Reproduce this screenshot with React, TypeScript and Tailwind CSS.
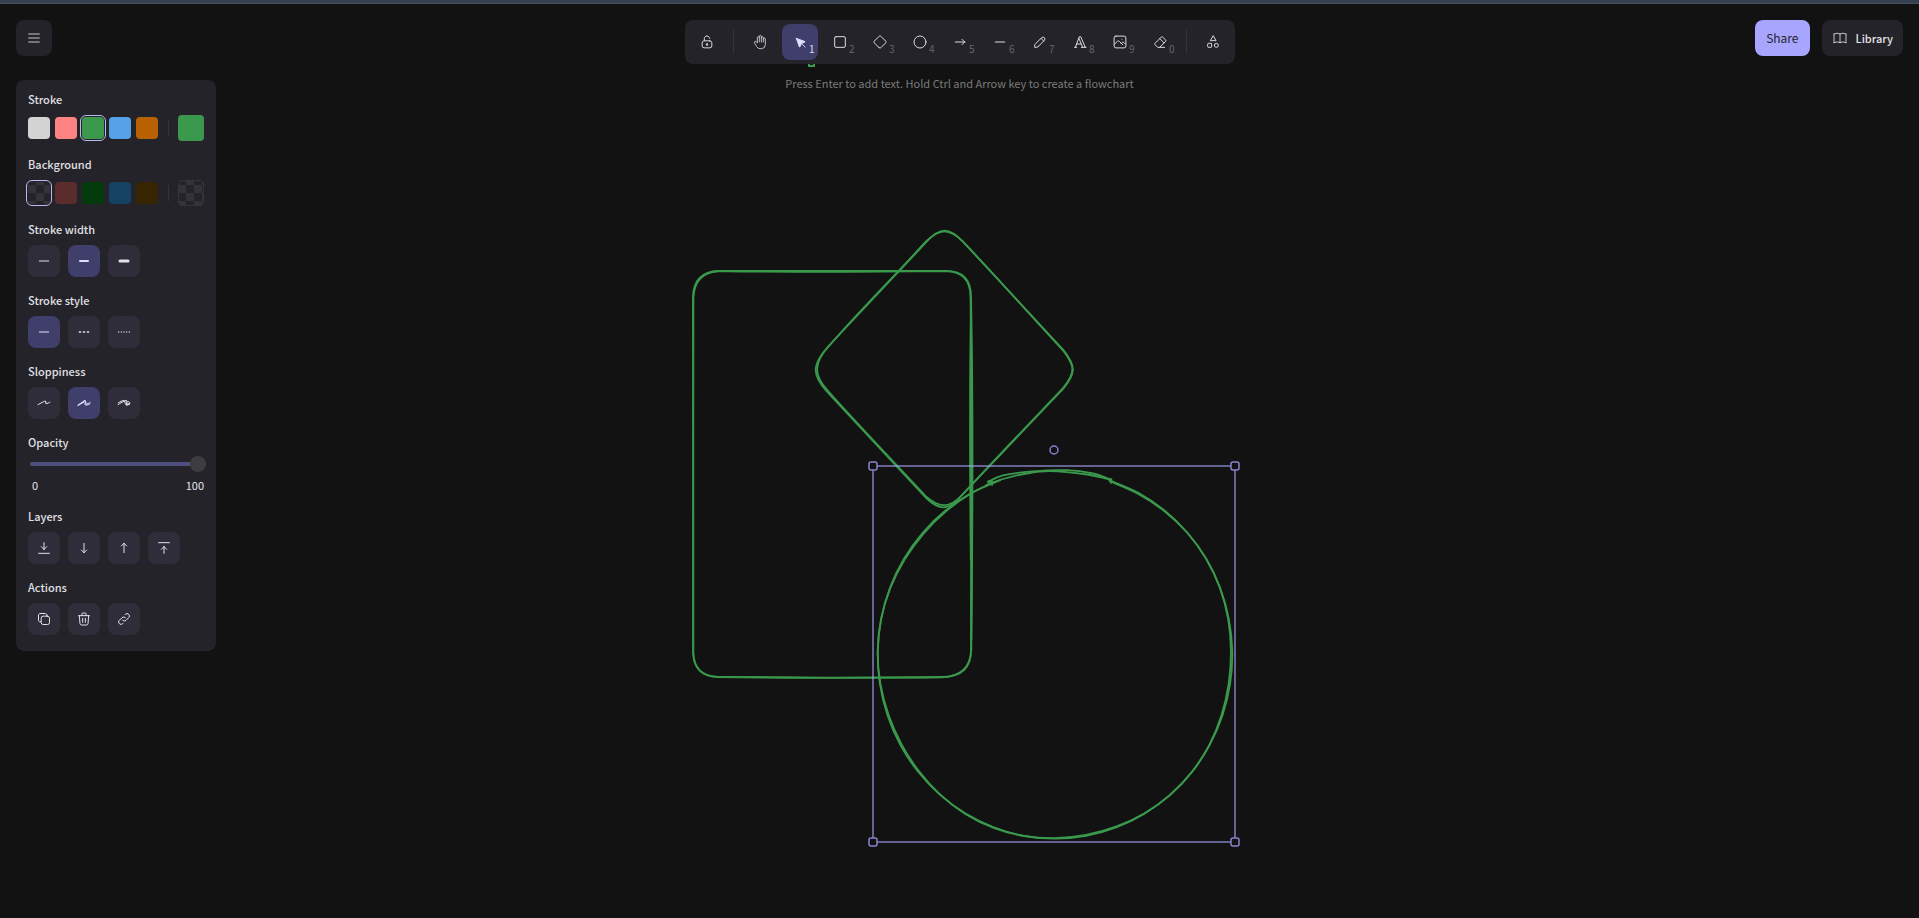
import React from "react";

type Pt = [number, number];

function spline(pts: Pt[]) {
  const n = pts.length;
  const at = (i: number): Pt => pts[Math.max(0, Math.min(n - 1, i))];
  let d = `M${pts[0][0]} ${pts[0][1]}`;
  for (let i = 0; i < n - 1; i++) {
    const [p0, p1, p2, p3] = [at(i - 1), at(i), at(i + 1), at(i + 2)];
    const c1 = [p1[0] + (p2[0] - p0[0]) / 6, p1[1] + (p2[1] - p0[1]) / 6];
    const c2 = [p2[0] - (p3[0] - p1[0]) / 6, p2[1] - (p3[1] - p1[1]) / 6];
    d += `C${c1[0].toFixed(2)} ${c1[1].toFixed(2)} ${c2[0].toFixed(2)} ${c2[1].toFixed(2)} ${p2[0].toFixed(2)} ${p2[1].toFixed(2)}`;
  }
  return d;
}

/** One hand-drawn lap of an ellipse, with a slow wobble of its radius. */
function lap(cx: number, cy: number, rx: number, ry: number, wobble: (t: number) => number): Pt[] {
  const steps = 32;
  const start = (-72 * Math.PI) / 180;
  const sweep = (324 * Math.PI) / 180;
  return Array.from({ length: steps + 1 }, (_, i) => {
    const t = start + (sweep * i) / steps;
    const w = wobble(t);
    return [cx + (rx + w) * Math.cos(t), cy + (ry + w) * Math.sin(t)];
  });
}

const lapOne = lap(1055, 655, 177, 184, (t) => 0.3 * Math.cos(2 * t));
const lapTwo = lap(1055, 655, 177, 184, (t) => -0.4 + 0.8 * Math.cos(5 * t + 2.6));

const Ic = ({
  d,
  box = 24,
  w = 1.5,
  fill = "none",
  children,
}: {
  d?: string;
  box?: number;
  w?: number;
  fill?: string;
  children?: React.ReactNode;
}) => (
  <svg
    aria-hidden="true"
    className="size-4 shrink-0"
    viewBox={`0 0 ${box} ${box}`}
    fill={fill}
    stroke="currentColor"
    strokeWidth={w}
    strokeLinecap="round"
    strokeLinejoin="round"
  >
    {d && <path d={d} />}
    {children}
  </svg>
);

const tools = [
  { name: "Hand", icon: <Ic w={1.25} d="M8 13v-7.5a1.5 1.5 0 0 1 3 0v6.5M11 5.5v-2a1.5 1.5 0 1 1 3 0v8.5M14 5.5a1.5 1.5 0 0 1 3 0v6.5M17 7.5a1.5 1.5 0 0 1 3 0v8.5a6 6 0 0 1 -6 6h-2h.208a6 6 0 0 1 -5.012 -2.7a69.74 69.74 0 0 1 -.196 -.3c-.312 -.479 -1.407 -2.388 -3.286 -5.728a1.5 1.5 0 0 1 .536 -2.022a1.867 1.867 0 0 1 2.28 .28l1.47 1.47" /> },
  { name: "Selection", key: "1", active: true, icon: <Ic box={22} w={1.25} fill="currentColor" d="M6 6l4.153 11.793a.365 .365 0 0 0 .331 .207a.366 .366 0 0 0 .332 -.207l2.184 -4.793l4.787 -1.994a.355 .355 0 0 0 .213 -.323a.355 .355 0 0 0 -.213 -.323l-11.787 -4.36zM13.5 13.5l4.5 4.5" /> },
  { name: "Rectangle", key: "2", icon: <Ic><rect x="4" y="4" width="16" height="16" rx="2" /></Ic> },
  { name: "Diamond", key: "3", icon: <Ic d="M10.5 20.4l-6.9 -6.9c-.781 -.781 -.781 -2.219 0 -3l6.9 -6.9c.781 -.781 2.219 -.781 3 0l6.9 6.9c.781 .781 .781 2.219 0 3l-6.9 6.9c-.781 .781 -2.219 .781 -3 0z" /> },
  { name: "Ellipse", key: "4", icon: <Ic><circle cx="12" cy="12" r="9" /></Ic> },
  { name: "Arrow", key: "5", icon: <Ic d="M5 12h14M15 16l4 -4M15 8l4 4" /> },
  { name: "Line", key: "6", icon: <Ic box={20} d="M4.167 10h11.666" /> },
  { name: "Draw", key: "7", icon: <Ic box={20} w={1.25} d="m7.643 15.69 7.774-7.773a2.357 2.357 0 1 0-3.334-3.334L4.31 12.357a3.333 3.333 0 0 0-.977 2.357v1.953h1.953c.884 0 1.732-.352 2.357-.977ZM11.25 5.417l3.333 3.333" /> },
  { name: "Text", key: "8", icon: <Ic d="M4 20h3M14 20h7M6.9 15h6.9M10.2 6.3L16 20M5 20L11 4h2l7 16" /> },
  { name: "Insert image", key: "9", icon: <Ic box={20} w={1.25} d="M12.5 6.667h.01M4.91 2.625h10.18a2.284 2.284 0 0 1 2.285 2.284v10.182a2.284 2.284 0 0 1-2.284 2.284H4.909a2.284 2.284 0 0 1-2.284-2.284V4.909a2.284 2.284 0 0 1 2.284-2.284ZM3.333 12.5l3.334-3.333c.773-.745 1.726-.745 2.5 0l4.166 4.166M11.667 11.667l.833-.834c.774-.744 1.726-.744 2.5 0l1.667 1.667" /> },
  { name: "Eraser", key: "0", icon: <Ic d="M19 20h-10.5l-4.21 -4.3a1 1 0 0 1 0 -1.41l10 -10a1 1 0 0 1 1.41 0l5 5a1 1 0 0 1 0 1.41l-9.2 9.3M18 13.3l-6.3 -6.3" /> },
];

const Tool = ({ name, icon, k, active }: { name: string; icon: React.ReactNode; k?: string; active?: boolean }) => (
  <button
    aria-label={name}
    aria-pressed={!!active}
    className={`relative flex size-9 items-center justify-center rounded-lg ${active ? "bg-[#403e6a] text-[#e0dfff]" : "text-[#dadadf]"}`}
  >
    {icon}
    {k && (
      <span className={`absolute right-[3px] bottom-[5px] text-[10px] leading-3 ${active ? "text-[#e0dfff]" : "text-[#66666b]"}`}>{k}</span>
    )}
  </button>
);

const Section = ({ title, children }: { title: string; children: React.ReactNode }) => (
  <fieldset className="min-w-0">
    <legend className="mb-2 block h-4 text-[11px] leading-4 font-medium text-[#e0e0e5]">{title}</legend>
    {children}
  </fieldset>
);

const Row = ({ items, active }: { items: [string, React.ReactNode][]; active?: number }) => (
  <div className="flex gap-2">
    {items.map(([label, icon], i) => (
      <button
        key={label}
        aria-label={label}
        className={`flex size-8 items-center justify-center rounded-lg ${i === active ? "bg-[#403e6a] text-[#e0dfff]" : "bg-[#2e2d39] text-[#e3e3e8]"}`}
      >
        {icon}
      </button>
    ))}
  </div>
);

const CHECKER = "bg-[#232329] bg-[conic-gradient(#343339_25%,transparent_0_50%,#343339_0_75%,transparent_0)] bg-size-[16px_16px]";

const Swatches = ({ items, active, current, label }: { items: string[]; active: number; current: string; label: string }) => (
  <div className="flex h-[26px] items-center">
    <div className="flex gap-[5px]">
      {items.map((c, i) => (
        <button
          key={c}
          aria-label={`${label} ${i + 1}`}
          className={`size-[22px] rounded-sm ${c} ${i === active ? "outline-1 outline-offset-1 outline-[#bdb8f0]" : ""}`}
        />
      ))}
    </div>
    <div className="mx-auto h-4 w-px bg-[#35343c]" />
    <button aria-label={`${label} picker`} className={`size-[26px] rounded-sm ${current}`} />
  </div>
);

export default function App() {
  return (
    <div className="relative h-screen overflow-hidden bg-[#121212] font-['Noto_Sans_CJK_SC','Open_Sans',sans-serif] text-[#e3e3e8]">
      <svg className="absolute inset-0 size-full" role="img" aria-label="Drawing canvas" fill="none">
        <g stroke="#3a994c" strokeWidth="1.8" strokeLinecap="round">
          <path d="M809 60v6h5v-6" strokeWidth="2" />
          <path d="M719 271C800 271.5 880 271.5 946 271C963 271 971 279 971 297C971.5 420 970.5 540 971 650C971 668 961 677 942 677C870 678 790 678 718 677C701 676 693.5 668 693.3 653C693.5 530 693.5 410 693 298C693 280 702 271.5 719 271" />
          <path d="M719 271C790 272.5 870 272 946 271.2C962 271.5 970.5 280 970.5 297C972.5 400 972.5 500 971.3 650C970.5 667 961 676.5 942 677.3C870 678.3 790 677.5 718 676.8C702 677 694 668 693.2 653C694.2 530 694.2 410 693.4 298C694 281 702 272 719 271" />
          <path d="M971 298C973 390 973.2 480 971.3 640M971 298C969.6 390 969.8 470 970.8 560" />
          <path d="M926.7 241.7C940 227 949 227 963 241.7L1063.5 350C1076 366 1076 373 1063.5 388.5L963.3 493.5C949 511 940 511 926.7 498.5L827 391.7C812 375 811 365 829.5 345Z" />
          <path d="M925.7 241.7C940 228 949 228 963 241.7C996 276 1030 315 1063 350.5C1075.5 366 1075.5 373 1063 388C1030 423 997 457 963.3 494C949 509 939 508 926 496.5C893 461 860 427 827.7 390.7C813.5 375 813 363 830 345C862 308 893 278 925.7 241.7" />
          <path d={spline(lapOne)} />
          <path d={spline(lapTwo)} />
          <path d={spline([[986, 485], [1003, 479], [1024, 474], [1050, 471.2], [1087, 474.5], [1111.5, 480]])} />
          <path d={spline([[988, 482], [1003, 475.3], [1033, 471.3], [1067, 470.2], [1093, 473.5], [1111, 479.5]])} />
          <path d="M988 481.5h4v3.5M988 481.5l4 1M1111 479v4" />
        </g>
        <rect x="873" y="466" width="362" height="376" stroke="#a8a5ff" strokeOpacity="0.55" strokeWidth="2" />
        <g fill="#121212" stroke="#8783d0" strokeWidth="1.5">
          <rect x="869" y="462" width="8" height="8" rx="2" />
          <rect x="1231" y="462" width="8" height="8" rx="2" />
          <rect x="869" y="838" width="8" height="8" rx="2" />
          <rect x="1231" y="838" width="8" height="8" rx="2" />
          <circle cx="1054" cy="450" r="4" />
        </g>
      </svg>

      <div className="relative h-1 border-b border-[#46505e] bg-[#343f4f]" />

      <header className="relative grid grid-cols-[1fr_auto_1fr] items-start px-4 pt-4">
        <button aria-label="Menu" className="flex size-9 items-center justify-center rounded-lg bg-[#232329] text-[#c8c8cd]">
          <Ic d="M4 6h16M4 12h16M4 18h16" />
        </button>

        <div className="flex flex-col items-center">
          <div role="toolbar" aria-label="Shapes" className="flex items-center rounded-lg bg-[#232329] p-1">
            <Tool
              name="Keep selected tool active"
              icon={<Ic box={20} w={1.25} d="M13.542 8.542H6.458a2.5 2.5 0 0 0-2.5 2.5v3.75a2.5 2.5 0 0 0 2.5 2.5h7.084a2.5 2.5 0 0 0 2.5-2.5v-3.75a2.5 2.5 0 0 0-2.5-2.5ZM10 13.958a1.042 1.042 0 1 0 0-2.083 1.042 1.042 0 0 0 0 2.083ZM6.667 8.333V5.417C6.667 3.806 8.159 2.5 10 2.5c1.84 0 3.333 1.306 3.333 2.917" />}
            />
            <div className="mx-2 h-6 w-px bg-[#33323d]" />
            <div className="flex gap-1">
              {tools.map((t) => (
                <Tool key={t.name} name={t.name} icon={t.icon} k={t.key} active={t.active} />
              ))}
            </div>
            <div className="mx-2 h-6 w-px bg-[#33323d]" />
            <Tool name="More tools" icon={<Ic d="M12 3l-4 7h8zM17 17m-3 0a3 3 0 1 0 6 0a3 3 0 1 0 -6 0M4 14m0 1a1 1 0 0 1 1 -1h4a1 1 0 0 1 1 1v4a1 1 0 0 1 -1 1h-4a1 1 0 0 1 -1 -1z" />} />
          </div>
          <p className="mt-[11px] mb-px text-[11px] leading-4 text-[#7a7a7a]">
            Press Enter to add text. Hold Ctrl and Arrow key to create a flowchart
          </p>
        </div>

        <div className="flex justify-end gap-3">
          <button className="h-9 rounded-lg bg-[#a8a5ff] px-[11px] text-[12px] text-[#232329]">Share</button>
          <button className="flex h-9 items-center gap-2 rounded-lg bg-[#232329] px-[10px] text-[11px] font-medium text-[#e3e3e8]">
            <Ic w={1.25} d="M3 19a9 9 0 0 1 9 0a9 9 0 0 1 9 0M3 6a9 9 0 0 1 9 0a9 9 0 0 1 9 0M3 6v13M12 6v13M21 6v13" />
            Library
          </button>
        </div>
      </header>

      <aside className="relative -mt-3 ml-4 flex w-[200px] flex-col gap-[15px] rounded-lg bg-[#232329] px-3 pt-[11px] pb-4">
        <Section title="Stroke">
          <Swatches label="Stroke colour" active={2} current="bg-[#3a994c]" items={["bg-[#d3d3d3]", "bg-[#ff8383]", "bg-[#3a994c]", "bg-[#56a2e8]", "bg-[#b76100]"]} />
        </Section>
        <Section title="Background">
          <Swatches label="Background colour" active={0} current={`border border-[#35343a] bg-position-[-1px_-4px] ${CHECKER}`} items={[`bg-position-[0px_-5px] ${CHECKER}`, "bg-[#5b2c2c]", "bg-[#043b0c]", "bg-[#154163]", "bg-[#362500]"]} />
        </Section>
        <Section title="Stroke width">
          <Row
            active={1}
            items={[
              ["Thin", <Ic box={20} w={1.25} d="M4.167 10h11.666" />],
              ["Bold", <Ic box={20} w={2.5} d="M5 10h10" />],
              ["Extra bold", <Ic box={20} w={3.75} d="M5 10h10" />],
            ]}
          />
        </Section>
        <Section title="Stroke style">
          <Row
            active={0}
            items={[
              ["Solid", <Ic box={20} w={1.25} d="M4.167 10h11.666" />],
              ["Dashed", <Ic w={2} d="M5 12h2M17 12h2M11 12h2" />],
              ["Dotted", <Ic w={2} d="M4 12v.01M8 12v.01M12 12v.01M16 12v.01M20 12v.01" />],
            ]}
          />
        </Section>
        <Section title="Sloppiness">
          <Row
            active={1}
            items={[
              ["Architect", <Ic box={20} w={1.25} d="M2.5 12.038c1.655-.885 5.9-3.292 8.568-4.354 2.668-1.063.101 2.821 1.32 3.104 1.218.283 5.112-1.814 5.112-1.814" />],
              ["Artist", <Ic box={20} w={1.25} d="M2.5 12.563c1.655-.886 5.9-3.293 8.568-4.355 2.668-1.062.101 2.822 1.32 3.105 1.218.283 5.112-1.814 5.112-1.814m-13.469 2.23c2.963-1.586 6.13-5.62 7.468-4.998 1.338.623-1.153 4.11-.132 5.595 1.02 1.487 6.133-1.43 6.133-1.43M2.5 13.3c2.2-.9 4.6-3.4 7.1-4.6" />],
              ["Cartoonist", <Ic box={20} w={1.25} d="M2.5 11.936c1.737-.879 8.627-5.346 10.42-5.268 1.795.078-.418 5.138.345 5.736.763.598 3.53-1.789 4.235-2.147M2.929 9.788c1.164-.519 5.47-3.28 6.987-3.114 1.519.165 1 3.827 2.121 5.28 1.122 1.453 4.139-.016 5.006-.42M12.6 9.6c1-2.1 4.6-1.7 4.3.4-.3 1.9-2.8 1.9-3.6.5" />],
            ]}
          />
        </Section>
        <Section title="Opacity">
          <div className="flex h-[35px] flex-col justify-between pb-px">
            <input
              type="range"
              aria-label="Opacity"
              min={0}
              max={100}
              defaultValue={100}
              className="-mt-[2px] ml-[2px] h-4 w-44 appearance-none bg-transparent [&::-webkit-slider-runnable-track]:h-1 [&::-webkit-slider-runnable-track]:rounded-full [&::-webkit-slider-runnable-track]:bg-[#504e7e] [&::-webkit-slider-thumb]:-mt-[6px] [&::-webkit-slider-thumb]:size-4 [&::-webkit-slider-thumb]:appearance-none [&::-webkit-slider-thumb]:rounded-full [&::-webkit-slider-thumb]:bg-[#3d3d3d]"
            />
            <div className="flex justify-between pl-1 text-[11px] leading-[14px] text-[#e3e3e8]">
              <span>0</span>
              <span>100</span>
            </div>
          </div>
        </Section>
        <Section title="Layers">
          <Row
            items={[
              ["Send to back", <Ic d="M12 4v10M12 14l4 -4M12 14l-4 -4M4 20h16" />],
              ["Send backward", <Ic d="M12 5v14M16 15l-4 4M8 15l4 4" />],
              ["Bring forward", <Ic d="M12 5v14M16 9l-4 -4M8 9l4 -4" />],
              ["Bring to front", <Ic d="M12 10v10M12 10l4 4M12 10l-4 4M4 4h16" />],
            ]}
          />
        </Section>
        <Section title="Actions">
          <Row
            items={[
              ["Duplicate", <Ic box={20} w={1.25} d="M14.375 6.458H8.958a2.5 2.5 0 0 0-2.5 2.5v5.417a2.5 2.5 0 0 0 2.5 2.5h5.417a2.5 2.5 0 0 0 2.5-2.5V8.958a2.5 2.5 0 0 0-2.5-2.5ZM13.542 6.458V5c0-1.035-.84-1.875-1.875-1.875H5c-1.036 0-1.875.84-1.875 1.875v6.667c0 1.035.84 1.875 1.875 1.875h1.458" />],
              ["Delete", <Ic box={20} w={1.25} d="M3.333 5.833h13.334M8.333 9.167v5M11.667 9.167v5M4.167 5.833l.833 10c0 .92.746 1.667 1.667 1.667h6.666c.92 0 1.667-.746 1.667-1.667l.833-10M7.5 5.833v-2.5c0-.46.373-.833.833-.833h3.334c.46 0 .833.373.833.833v2.5" />],
              ["Link", <Ic box={20} w={1.25} d="M8.333 11.667a2.917 2.917 0 0 0 4.167 0l3.333-3.334a2.946 2.946 0 1 0-4.166-4.166l-.417.416M11.667 8.333a2.917 2.917 0 0 0-4.167 0l-3.333 3.334a2.946 2.946 0 0 0 4.166 4.166l.417-.416" />],
            ]}
          />
        </Section>
      </aside>
    </div>
  );
}
